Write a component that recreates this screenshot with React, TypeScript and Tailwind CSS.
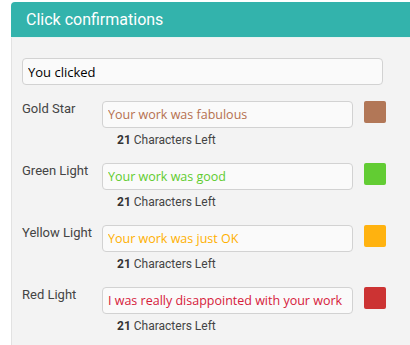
import React from "react";

const rows = [
  { label: "Gold Star", text: "Your work was fabulous", color: "text-[#b5704f]", swatch: "bg-[#b27757]" },
  { label: "Green Light", text: "Your work was good", color: "text-[#5fcc2e]", swatch: "bg-[#62cc33]" },
  { label: "Yellow Light", text: "Your work was just OK", color: "text-[#ffb000]", swatch: "bg-[#ffb20f]" },
  { label: "Red Light", text: "I was really disappointed with your work", color: "text-[#d6203a]", swatch: "bg-[#cc3333]" },
];

export default function App() {
  return (
    <div className="w-[410px] h-[345px] overflow-hidden bg-white font-['Roboto',sans-serif]">
      <div className="ml-[11px] mt-[2px] w-[420px]">
        <div className="h-[36px] bg-[#33b3ac] rounded-tl-[4px] flex items-center pl-[15px] border-b border-[#e8f3f2]">
          <span className="text-white text-[16px] leading-none">Click confirmations</span>
        </div>
        <div className="bg-[#f3f3f3] border-l border-[#e2e2e2] pl-[10px] pt-[20px] pb-[40px]">
          <input
            readOnly
            defaultValue="You clicked"
            className="block w-[361px] h-[27px] rounded-[4px] border border-[#d2d2d2] bg-[#fafafa] pl-[5px] text-[13px] text-black font-['Open_Sans',sans-serif] outline-none"
          />
          <div className="mt-[16px] flex flex-col gap-[15px]">
            {rows.map((r) => (
              <div key={r.label} className="flex items-start">
                <div className="w-[80px] text-[13px] leading-[16px] text-[#444]">{r.label}</div>
                <div className="flex flex-col">
                  <input
                    readOnly
                    defaultValue={r.text}
                    className={`block w-[251px] h-[27px] rounded-[4px] border border-[#d2d2d2] bg-[#fafafa] pl-[5px] text-[12.5px] font-['Open_Sans',sans-serif] outline-none ${r.color}`}
                  />
                  <div className="mt-[4px] pl-[15px] text-[12px] leading-[16px] text-[#444]">
                    <span className="font-bold text-[#333]">21</span> Characters Left
                  </div>
                </div>
                <div className={`ml-[11px] w-[22px] h-[22px] rounded-[2px] ${r.swatch}`} />
              </div>
            ))}
          </div>
        </div>
      </div>
    </div>
  );
}
